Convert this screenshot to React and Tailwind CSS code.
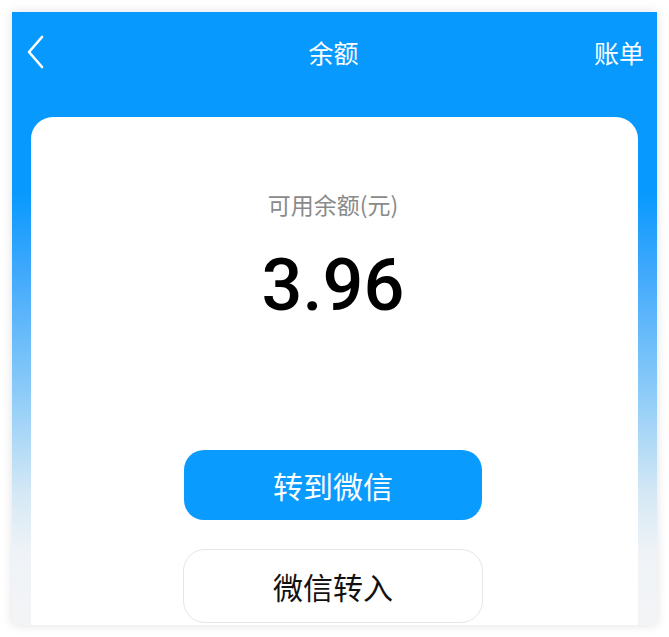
export default function App() {
  return (
    <div className="w-[669px] h-[637px] bg-white p-[12px]" style={{ fontFamily: '"Noto Sans CJK SC", Roboto, sans-serif' }}>
      <div className="w-[645px] h-[613px] overflow-hidden shadow-[0_0_10px_rgba(0,0,0,0.12)] bg-[linear-gradient(to_bottom,#0799fe_0px,#0799fe_180px,#40a9fc_260px,#8ccbf8_380px,#d4e8f5_480px,#eff3f7_540px,#f3f4f6_613px)] flex flex-col">
        {/* Header */}
        <div className="h-[84px] flex items-center justify-between px-[13px] pb-[4px] text-white">
          <svg width="22" height="36" viewBox="0 0 22 36" fill="none" stroke="white" strokeWidth="2.6" strokeLinecap="round" strokeLinejoin="round">
            <path d="M17 3L4 18l13 15" />
          </svg>
          <div className="text-[25px] leading-none pl-[26px]">余额</div>
          <div className="text-[25px] leading-none">账单</div>
        </div>

        {/* Card */}
        <div className="mx-[19px] mt-[21px] flex-1 bg-white rounded-t-[22px] flex flex-col items-center pr-[3px]">
          <div className="mt-[76px] text-[23px] leading-none text-[#8a8a8a]">可用余额(元)</div>
          <div className="mt-[34px] text-[72px] leading-none font-medium text-black" style={{ fontFamily: 'Roboto, sans-serif' }}>3.96</div>
          <button className="mt-[128px] w-[298px] h-[70px] rounded-[20px] bg-[#0a9bfe] text-white text-[30px]">转到微信</button>
          <button className="mt-[29px] w-[300px] h-[74px] rounded-[22px] border border-[#e6e6e6] bg-white text-[#111] text-[30px]">微信转入</button>
        </div>
      </div>
    </div>
  );
}
